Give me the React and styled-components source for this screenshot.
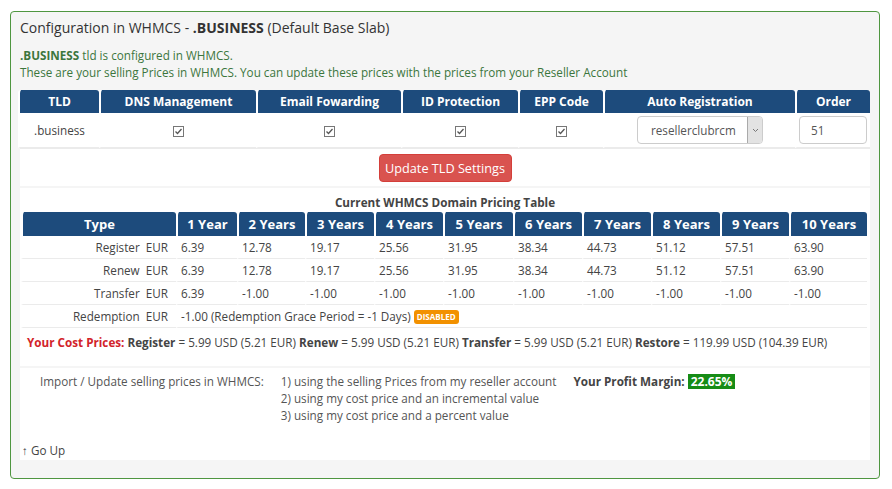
import React from 'react';
import styled, { createGlobalStyle } from 'styled-components';

const GlobalStyle = createGlobalStyle`
    body {
        margin: 0;
        background: #fff;
        font-family: "Open Sans", "Liberation Sans", sans-serif;
        font-size: 11.7px;
        color: #333;
    }
`;

const Panel = styled.div`
    box-sizing: border-box;
    width: 870px;
    margin: 11px 0 0 10px;
    border: 1px solid #4f9640;
    border-radius: 4px;
    background: #f5f5f5;
    padding: 6px 9px 16px 9px;
`;

const Title = styled.div`
    font-size: 14px;
    line-height: 20px;
    color: #333;
    margin-bottom: 9px;
`;

const Notice = styled.div`
    color: #3c763d;
    line-height: 17px;
    margin-bottom: 9px;
`;

const Section = styled.div`
    background: #fff;
    margin-bottom: 2px;
`;

const Grid = styled.table`
    width: calc(100% + 2px);
    margin-left: -2px;
    border-collapse: separate;
    border-spacing: 0;
    table-layout: fixed;
`;

const Head = styled.th`
    height: ${p => p.h || 23}px;
    padding: 0;
    border-left: 2px solid #fff;
    background: #1d4b7c;
    background-clip: padding-box;
    border-radius: 3px 3px 0 0;
    color: #fff;
    font-size: ${p => p.fs || 12}px;
    font-weight: bold;
    text-align: center;
`;

const Cell = styled.td`
    height: ${p => p.h || 22}px;
    padding: ${p => p.pad || '0 3px'};
    border-left: 2px solid #fff;
    border-bottom: 1px solid #ebebeb;
    text-align: ${p => p.align || 'left'};
    color: #444;
    white-space: nowrap;
    overflow: visible;
`;

const ButtonRow = styled.div`
    height: 37px;
    border-top: 1px solid #ebebeb;
    display: flex;
    align-items: center;
    justify-content: center;
`;

const DangerButton = styled.button`
    width: 133px;
    height: 28px;
    border: 1px solid #d43f3a;
    border-radius: 4px;
    background: #d9534f;
    color: #fff;
    font-family: inherit;
    font-size: 12.7px;
    padding: 0;
`;

const SelectBox = styled.div`
    box-sizing: border-box;
    width: 126px;
    height: 28px;
    margin: 0 auto;
    border: 1px solid #ccc;
    border-radius: 4px;
    display: flex;
    align-items: stretch;
    overflow: hidden;
`;

const SelectText = styled.span`
    flex: 1;
    display: flex;
    align-items: center;
    padding-left: 13px;
    color: #555;
`;

const SelectArrow = styled.span`
    width: 14px;
    background: #e3e3e3;
    border-left: 1px solid #aaa;
    display: flex;
    align-items: center;
    justify-content: center;
`;

const OrderInput = styled.div`
    box-sizing: border-box;
    width: 68px;
    height: 28px;
    border: 1px solid #ccc;
    border-radius: 4px;
    display: flex;
    align-items: center;
    padding-left: 11px;
    color: #555;
`;

const Caption = styled.div`
    text-align: center;
    font-weight: bold;
    color: #444;
    line-height: 17px;
    padding: 6px 0 1px;
`;

const PricingWrap = styled.div`
    padding: 0 3px;
`;

const Badge = styled.span`
    display: inline-block;
    background: ${p => p.bg};
    color: #fff;
    font-weight: bold;
    font-size: ${p => p.fs || 12}px;
    line-height: ${p => p.lh || 15}px;
    padding: 0 3px;
    border-radius: ${p => p.r || 0}px;
    vertical-align: ${p => p.va || 'baseline'};
`;

const CostLine = styled.div`
    padding: 6px 7px 15px;
    line-height: 17px;
    color: #444;
`;

const Red = styled.b`
    color: #d2232a;
`;

const ImportRow = styled.div`
    display: flex;
    gap: 17px;
    padding: 5px 0 0 20px;
    line-height: 17px;
    color: #555;
`;

const OptionList = styled.div`
    display: flex;
    flex-direction: column;
`;

const Profit = styled.div`
    color: #444;
    font-weight: bold;
`;

const GoUp = styled.div`
    padding: 18px 2px 1px;
    line-height: 17px;
    color: #444;
`;

const Check = () => (
    <svg width="11" height="11" viewBox="0 0 11 11" style={{ verticalAlign: 'middle' }}>
        <rect x="0.5" y="0.5" width="10" height="10" fill="#fff" stroke="#777" />
        <path d="M2.5 5.5 L4.5 7.5 L8.5 3" fill="none" stroke="#555" strokeWidth="1.3" />
    </svg>
);

const years = ['1 Year', '2 Years', '3 Years', '4 Years', '5 Years', '6 Years', '7 Years', '8 Years', '9 Years', '10 Years'];
const yearWidths = [61, 68, 69, 69, 70, 69, 69, 69, 69, 78];

const rows = [
    ['Register', ['6.39', '12.78', '19.17', '25.56', '31.95', '38.34', '44.73', '51.12', '57.51', '63.90']],
    ['Renew', ['6.39', '12.78', '19.17', '25.56', '31.95', '38.34', '44.73', '51.12', '57.51', '63.90']],
    ['Transfer', ['6.39', '-1.00', '-1.00', '-1.00', '-1.00', '-1.00', '-1.00', '-1.00', '-1.00', '-1.00']],
];

export default function App() {
    return (
        <>
            <GlobalStyle />
            <Panel>
                <Title>
                    Configuration in WHMCS - <b>.BUSINESS</b> (Default Base Slab)
                </Title>
                <Notice>
                    <b>.BUSINESS</b> tld is configured in WHMCS.<br />
                    These are your selling Prices in WHMCS. You can update these prices with the prices from your Reseller Account
                </Notice>

                <Section>
                    <Grid>
                        <colgroup>
                            {[81, 157, 145, 117, 85, 192, 75].map((w, i) => <col key={i} style={{ width: w }} />)}
                        </colgroup>
                        <thead>
                            <tr>
                                <Head>TLD</Head>
                                <Head>DNS Management</Head>
                                <Head>Email Fowarding</Head>
                                <Head>ID Protection</Head>
                                <Head>EPP Code</Head>
                                <Head>Auto Registration</Head>
                                <Head>Order</Head>
                            </tr>
                        </thead>
                        <tbody>
                            <tr>
                                <Cell h={34} align="center">.business</Cell>
                                <Cell h={34} align="center"><Check /></Cell>
                                <Cell h={34} align="center"><Check /></Cell>
                                <Cell h={34} align="center"><Check /></Cell>
                                <Cell h={34} align="center"><Check /></Cell>
                                <Cell h={34} align="center">
                                    <SelectBox>
                                        <SelectText>resellerclubrcm</SelectText>
                                        <SelectArrow>
                                            <svg width="7" height="5" viewBox="0 0 7 5">
                                                <path d="M1 1 L3.5 3.5 L6 1" fill="none" stroke="#777" strokeWidth="1" />
                                            </svg>
                                        </SelectArrow>
                                    </SelectBox>
                                </Cell>
                                <Cell h={34} pad="0 2px">
                                    <OrderInput>51</OrderInput>
                                </Cell>
                            </tr>
                        </tbody>
                    </Grid>
                    <ButtonRow>
                        <DangerButton>Update TLD Settings</DangerButton>
                    </ButtonRow>
                </Section>

                <Section>
                    <Caption>Current WHMCS Domain Pricing Table</Caption>
                    <PricingWrap>
                        <Grid>
                            <colgroup>
                                <col style={{ width: 155 }} />
                                {yearWidths.map((w, i) => <col key={i} style={{ width: w }} />)}
                            </colgroup>
                            <thead>
                                <tr>
                                    <Head h={24} fs={13}>Type</Head>
                                    {years.map(y => <Head key={y} h={24} fs={13}>{y}</Head>)}
                                </tr>
                            </thead>
                            <tbody>
                                {rows.map(([type, values]) => (
                                    <tr key={type}>
                                        <Cell align="right" pad="0 8px 0 0">{type}{'\u00a0 '}EUR</Cell>
                                        {values.map((v, i) => <Cell key={i}>{v}</Cell>)}
                                    </tr>
                                ))}
                                <tr>
                                    <Cell align="right" pad="0 8px 0 0">Redemption{'\u00a0 '}EUR</Cell>
                                    <Cell colSpan={10}>
                                        -1.00 (Redemption Grace Period = -1 Days){' '}
                                        <Badge bg="#f29100" fs={8} lh={14} r={3} va="1px">DISABLED</Badge>
                                    </Cell>
                                </tr>
                            </tbody>
                        </Grid>
                    </PricingWrap>
                    <CostLine>
                        <Red>Your Cost Prices:</Red> <b>Register</b> = 5.99 USD (5.21 EUR) <b>Renew</b> = 5.99 USD (5.21 EUR){' '}
                        <b>Transfer</b> = 5.99 USD (5.21 EUR) <b>Restore</b> = 119.99 USD (104.39 EUR)
                    </CostLine>
                </Section>

                <Section>
                    <ImportRow>
                        <span>Import / Update selling prices in WHMCS:</span>
                        <OptionList>
                            <span>1) using the selling Prices from my reseller account</span>
                            <span>2) using my cost price and an incremental value</span>
                            <span>3) using my cost price and a percent value</span>
                        </OptionList>
                        <Profit>
                            Your Profit Margin: <Badge bg="#168c16">22.65%</Badge>
                        </Profit>
                    </ImportRow>
                    <GoUp>↑ Go Up</GoUp>
                </Section>
            </Panel>
        </>
    );
}
